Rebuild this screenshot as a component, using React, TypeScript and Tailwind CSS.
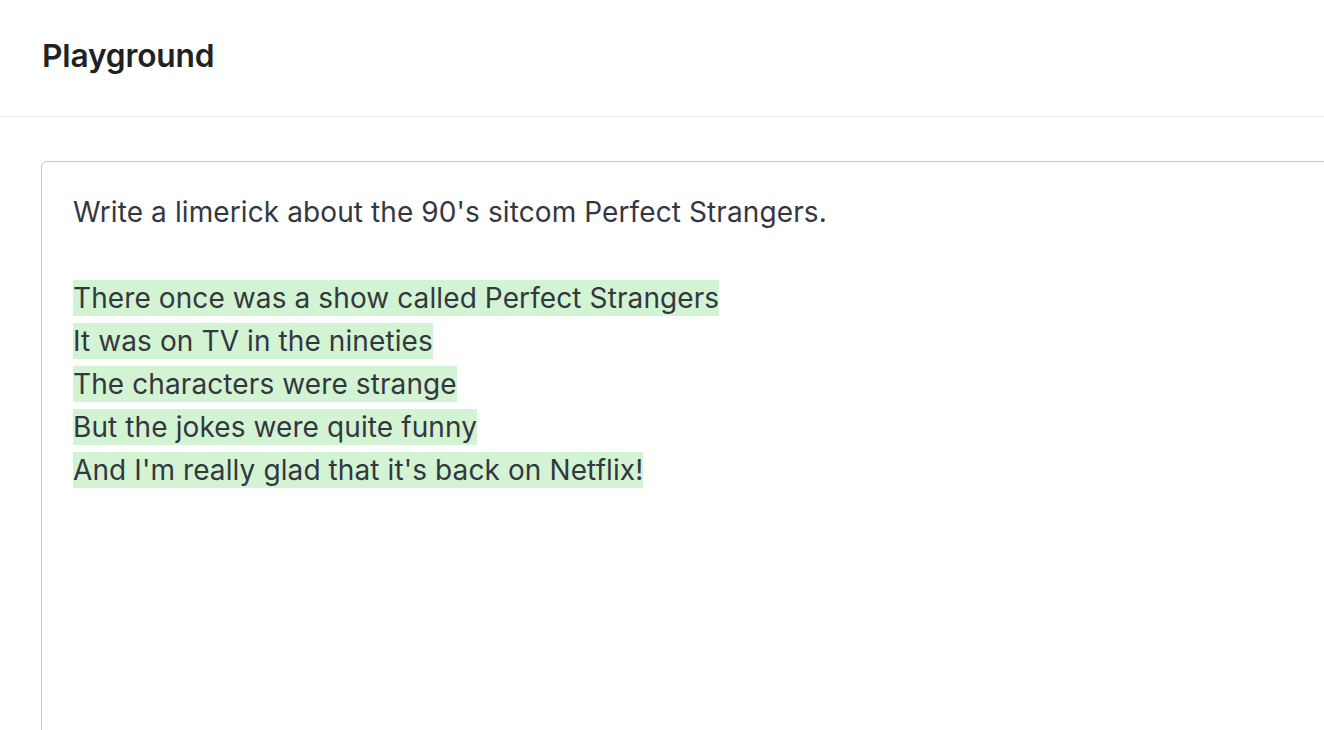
const lines = [
  'There once was a show called Perfect Strangers',
  'It was on TV in the nineties',
  'The characters were strange',
  'But the jokes were quite funny',
  "And I'm really glad that it's back on Netflix!",
];

export default function App() {
  return (
    <div className="h-[730px] w-[1324px] overflow-hidden bg-white font-['Inter',sans-serif]">
      <header className="h-[117px] border-b border-[#ececf1] flex items-center pl-[42px] pb-[4px]">
        <h1 className="text-[31.7px] font-semibold text-[#202123] tracking-[-0.005em]">Playground</h1>
      </header>
      <div className="pt-[44px] pl-[41px]">
        <div className="w-[1400px] h-[700px] rounded-[6px] border border-[#c5c5d2] pl-[31px] pt-[29px] text-[28px] leading-[43px] tracking-[0.1px] text-[#353740]">
          <p>Write a limerick about the 90's sitcom Perfect Strangers.</p>
          <p>&nbsp;</p>
          {lines.map((l) => (
            <div key={l}>
              <span className="bg-[#d2f4d3] py-[1px]">{l}</span>
            </div>
          ))}
        </div>
      </div>
    </div>
  );
}
